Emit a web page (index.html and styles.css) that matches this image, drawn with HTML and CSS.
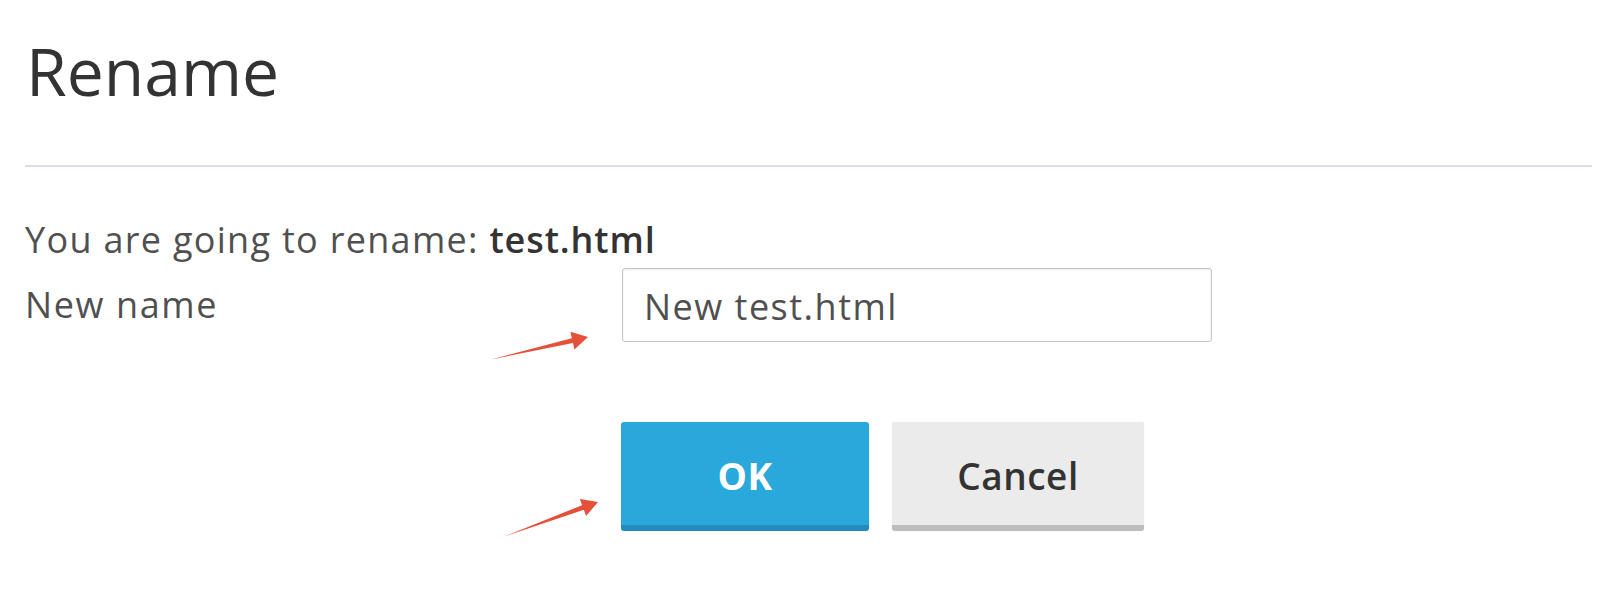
FILE: index.html
```html
<!DOCTYPE html>
<html lang="en">
<head>
<meta charset="utf-8">
<title>Rename</title>
<link rel="stylesheet" href="styles.css">
</head>
<body>
<div class="dialog">
  <header class="dialog-header">
    <h1 class="dialog-title">Rename</h1>
  </header>
  <form class="dialog-form">
    <p class="intro">You are going to rename: <strong class="filename">test.html</strong></p>
    <div class="field">
      <label class="field-label" for="newname">New name</label>
      <input class="field-input" id="newname" type="text" value="New test.html">
    </div>
    <div class="actions">
      <button type="button" class="btn btn-primary">OK</button>
      <button type="button" class="btn btn-default">Cancel</button>
    </div>
  </form>
  <svg class="annotations" width="1617" height="598" viewBox="0 0 1617 598" aria-hidden="true">
    <polygon fill="#e5503a" points="491,359.5 573,343 574.4,349.4 588,337 570.4,331.8 571.8,338.2"/>
    <polygon fill="#e5503a" points="504,536.5 583.9,509.8 586.1,516 598,502 579.9,499 582.1,505.2"/>
  </svg>
</div>
</body>
</html>
```

FILE: styles.css
```css
* {
  box-sizing: border-box;
}

html, body {
  margin: 0;
  padding: 0;
  background: #ffffff;
}

body {
  font-family: "Open Sans", "Noto Sans", "DejaVu Sans", sans-serif;
  color: #555555;
  width: 1617px;
  height: 598px;
  overflow: hidden;
}

.dialog {
  position: relative;
  width: 1617px;
  height: 598px;
}

.dialog-header {
  margin: 0 25px;
  padding: 38px 0 63px 1px;
  border-bottom: 2px solid #dddbea;
}

.dialog-title {
  margin: 0;
  font-size: 66px;
  line-height: 64px;
  font-weight: 400;
  color: #333333;
}

.dialog-form {
  padding: 50px 0 0 25px;
}

.intro {
  margin: 0;
  font-size: 36px;
  line-height: 46px;
  letter-spacing: 1.3px;
  color: #505050;
}

.filename {
  font-weight: 600;
  color: #333333;
  letter-spacing: 0.9px;
}

.field {
  display: grid;
  grid-template-columns: 597px 590px;
  align-items: center;
  margin-top: 5px;
}

.field-label {
  font-size: 36px;
  line-height: 46px;
  letter-spacing: 1.6px;
  color: #505050;
}

.field-input {
  width: 590px;
  height: 74px;
  margin: 0;
  padding: 3px 20px 0 21px;
  border: 1px solid #c4c4c4;
  border-radius: 3px;
  box-shadow: inset 0 1px 2px rgba(0, 0, 0, 0.08);
  font-family: "Open Sans", "Noto Sans", "DejaVu Sans", sans-serif;
  font-size: 36px;
  line-height: 46px;
  letter-spacing: 1.5px;
  color: #505050;
  background: #ffffff;
  outline: none;
}

.actions {
  display: flex;
  gap: 23px;
  margin: 80px 0 0 596px;
}

.btn {
  height: 109px;
  margin: 0;
  padding: 5px 0 0;
  border: 0;
  border-radius: 3px;
  font-family: "Open Sans", "Noto Sans", "DejaVu Sans", sans-serif;
  font-size: 37px;
  line-height: 46px;
  letter-spacing: 0.5px;
  cursor: pointer;
}

.btn-primary {
  width: 248px;
  background: #29a8dc;
  border-bottom: 6px solid #238cbd;
  color: #ffffff;
  font-weight: 700;
}

.btn-default {
  width: 252px;
  background: #ebebeb;
  border-bottom: 6px solid #bdbdbd;
  color: #333333;
  font-weight: 600;
  box-shadow: 0 0 1px rgba(0, 0, 0, 0.15);
}

.annotations {
  position: absolute;
  left: 0;
  top: 0;
  pointer-events: none;
}
```
